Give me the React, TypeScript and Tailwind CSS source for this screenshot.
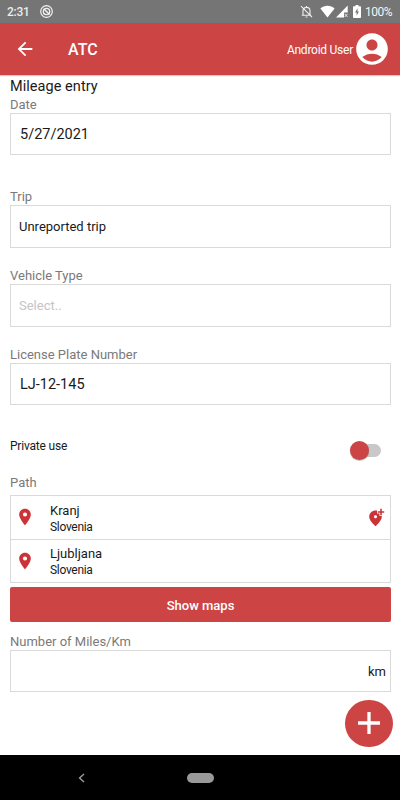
import React, { useState } from 'react';
import { MdAccountCircle, MdArrowBack, MdPlace } from 'react-icons/md';

interface Stop {
  city: string;
  country: string;
}

const STOPS: Stop[] = [
  { city: 'Kranj', country: 'Slovenia' },
  { city: 'Ljubljana', country: 'Slovenia' },
];

const StatusBar: React.FC = () => (
  <div className="flex h-[23px] shrink-0 items-center bg-[#757575] pr-2 pl-[7px] text-white">
    <span className="w-[33px] text-[12px] leading-none font-medium tracking-[-0.3px] text-[#ececec]">2:31</span>
    <svg className="h-[13px] w-[13px]" viewBox="0 0 13 13" fill="none" stroke="#f0f0f0">
      <circle cx="6.5" cy="6.5" r="5.8" strokeWidth="1.2" />
      <circle cx="6.5" cy="6.5" r="3.2" strokeWidth="1.3" />
      <path d="M4.3 4.3l5.2 5.2" strokeWidth="1.5" />
    </svg>
    <div className="ml-auto flex items-center">
      <svg className="mr-[7px] h-[13px] w-[13px]" viewBox="0 0 13 13" fill="none" stroke="#f0f0f0" strokeWidth="1.1">
        <path d="M3 10V5.8C3 3.8 4.4 2.4 6.5 2.4S10 3.8 10 5.8V10M1.8 10.2h9.4M6.5 1v1.4M5.6 12h1.8M1 1.2l11 11" />
      </svg>
      <svg className="h-[13px] w-[15px]" viewBox="0 0 15 13" fill="#fff">
        <path d="M7.5 12.4L.4 3.4C2.4 1.6 4.8.8 7.5.8s5.1.8 7.1 2.6z" />
      </svg>
      <svg className="ml-px h-[13px] w-[12px]" viewBox="0 0 12 13">
        <path d="M11.7.6V7.5H8V12.4H0z" fill="#fff" />
        <path d="M8.6 8.8l3 3.2M11.6 8.8l-3 3.2" stroke="#f0f0f0" strokeWidth="0.9" />
      </svg>
      <svg className="ml-[5px] h-[13px] w-[8px]" viewBox="0 0 8 13">
        <path d="M2.5 0h3v1.3H7.2c.5 0 .8.3.8.8v10c0 .5-.3.9-.8.9H.8c-.5 0-.8-.4-.8-.9v-10c0-.5.3-.8.8-.8h1.7z" fill="#fff" />
        <path d="M4.5 3.3L2.1 7.5h1.5v3.2L5.900 6.500H4.500z" fill="#757575" />
      </svg>
      <span className="ml-1 w-[27px] text-[12px] leading-none tracking-[-0.5px] whitespace-nowrap text-[#f4f4f4]">100%</span>
    </div>
  </div>
);

const AppBar: React.FC = () => (
  <header className="z-10 flex h-[52px] shrink-0 items-center bg-[#cc4444] pr-[9px] pl-[14px] text-white shadow-[0_1px_1px_rgba(0,0,0,0.2)]">
    <button aria-label="Back">
      <MdArrowBack className="h-[22px] w-[22px]" />
    </button>
    <h1 className="ml-8 pt-[2px] text-[16px] leading-5 font-medium">ATC</h1>
    <span className="ml-auto pt-px text-[12px] leading-4 tracking-[-0.25px]">Android User</span>
    <MdAccountCircle className="h-[38px] w-[38px]" />
  </header>
);

const Label: React.FC<{ children: React.ReactNode }> = ({ children }) => (
  <div className="h-4 text-[13px] leading-4 text-[#7a7a7a]">{children}</div>
);

const AddPlaceIcon: React.FC = () => (
  <svg className="h-[19px] w-[19px] fill-[#cc3338]" viewBox="0 0 24 24">
    <path d="M20 1v3h3v2h-3v3h-2V6h-3V4h3V1h2zm-8 12c1.1 0 2-.9 2-2s-.9-2-2-2-2 .9-2 2 .9 2 2 2zm2-9.75V7h3v3h2.92c.05.39.08.79.08 1.2 0 3.32-2.67 7.25-8 11.8-5.33-4.55-8-8.48-8-11.8C4 6.22 7.8 3 12 3c.68 0 1.35.08 2 .25z" />
  </svg>
);

const Toggle: React.FC<{ on: boolean; onToggle: () => void }> = ({ on, onToggle }) => (
  <button
    role="switch"
    aria-checked={on}
    aria-label="Private use"
    onClick={onToggle}
    className="mt-2 flex h-[13px] w-[30px] items-center rounded-full bg-[#c8c8c8]"
  >
    <span
      className={
        on
          ? 'ml-auto h-[19px] w-[19px] shrink-0 rounded-full bg-[#cc4444]'
          : '-ml-px h-[19px] w-[19px] shrink-0 rounded-full bg-[#cc4444] shadow-[0_1px_1px_rgba(0,0,0,0.25)]'
      }
    />
  </button>
);

const App: React.FC = () => {
  const [privateUse, setPrivateUse] = useState(false);

  return (
    <div className="relative flex h-[800px] w-[400px] flex-col overflow-hidden bg-white font-[Roboto,sans-serif] text-[#1a1a1a]">
      <StatusBar />
      <AppBar />

      <main className="flex-1 pr-[9px] pl-[10px]">
        <h2 className="h-[22px] text-[14.5px] leading-[23px] tracking-[0.05px]">Mileage entry</h2>

        <Label>Date</Label>
        <div className="flex h-[42px] items-center border border-[#dadada] pt-[2px] pl-[9px] text-[14.5px]">5/27/2021</div>

        <div className="mt-[34px]">
          <Label>Trip</Label>
          <div className="flex h-[43px] items-center border border-[#dadada] pl-2 text-[13px]">Unreported trip</div>
        </div>

        <div className="mt-5">
          <Label>Vehicle Type</Label>
          <div className="flex h-[43px] items-center border border-[#dadada] pl-2 text-[13px] text-[#c4c4c8]">Select..</div>
        </div>

        <div className="mt-5">
          <Label>License Plate Number</Label>
          <div className="flex h-[42px] items-center border border-[#dadada] pt-[2px] pl-[9px] text-[14.5px]">LJ-12-145</div>
        </div>

        <div className="mt-[33px] flex h-4 items-center justify-between pr-[10.5px]">
          <span className="text-[12px] leading-4 tracking-[-0.2px]">Private use</span>
          <Toggle on={privateUse} onToggle={() => setPrivateUse(!privateUse)} />
        </div>

        <div className="mt-[21px] mb-1">
          <Label>Path</Label>
        </div>
        <div className="border border-[#dadada]">
          {STOPS.map((stop, i) => (
            <div
              key={stop.city}
              className="flex h-[43px] items-center border-[#dadada] pr-[5px] pl-1 not-first:border-t"
            >
              <MdPlace className="mb-px h-5 w-5 text-[#cc3338]" />
              <div className="ml-[15px] pt-px">
                <div className="text-[13px] leading-[17px]">{stop.city}</div>
                <div className="text-[12px] leading-4 tracking-[-0.3px]">{stop.country}</div>
              </div>
              {i === 0 && (
                <button className="ml-auto" aria-label="Add stop">
                  <AddPlaceIcon />
                </button>
              )}
            </div>
          ))}
        </div>

        <button className="mt-1 block h-[35px] w-full rounded-[2px] bg-[#cc4444] pt-[2px] text-[13px] font-medium text-white">
          Show maps
        </button>

        <div className="mt-3">
          <Label>Number of Miles/Km</Label>
          <div className="flex h-[42px] items-center justify-end border border-[#dadada] pt-px pr-1 text-[13px]">km</div>
        </div>
      </main>

      <button
        aria-label="Add entry"
        className="absolute top-[699.5px] left-[345px] flex h-[47.5px] w-[47.5px] items-center justify-center rounded-full bg-[#cc4444]"
      >
        <svg className="h-[22px] w-[22px]" viewBox="0 0 22 22" stroke="#fff" strokeWidth="3.3">
          <path d="M11 0v22M0 11h22" />
        </svg>
      </button>

      <nav className="grid h-[45px] shrink-0 grid-cols-[162px_76px_162px] items-center bg-black">
        <svg className="ml-[78px] h-[10px] w-[7px]" viewBox="0 0 7 10" fill="none" stroke="#999" strokeWidth="1.5">
          <path d="M6 1L1.6 5 6 9" />
        </svg>
        <div className="mx-auto h-[10px] w-[27px] rounded-full bg-[#999]" />
      </nav>
    </div>
  );
};

export default App;
